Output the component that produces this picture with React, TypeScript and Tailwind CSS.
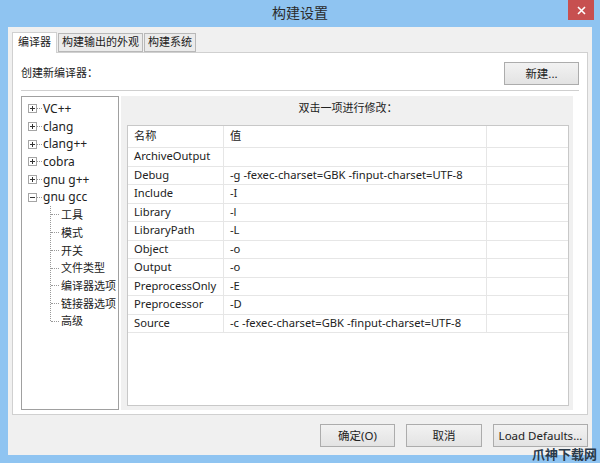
import React from "react";

const font = { fontFamily: '"Noto Sans", "Noto Sans CJK SC", sans-serif' };

const compilers = ["VC++", "clang", "clang++", "cobra", "gnu g++"];
const children = ["工具", "模式", "开关", "文件类型", "编译器选项", "链接器选项", "高级"];

const rows: [string, string][] = [
  ["ArchiveOutput", ""],
  ["Debug", "-g -fexec-charset=GBK -finput-charset=UTF-8"],
  ["Include", "-I"],
  ["Library", "-l"],
  ["LibraryPath", "-L"],
  ["Object", "-o"],
  ["Output", "-o"],
  ["PreprocessOnly", "-E"],
  ["Preprocessor", "-D"],
  ["Source", "-c -fexec-charset=GBK -finput-charset=UTF-8"],
];

function Expander({ open }: { open?: boolean }) {
  return (
    <svg width="9" height="9" viewBox="0 0 9 9" className="shrink-0">
      <rect x="0.5" y="0.5" width="8" height="8" fill="#fff" stroke="#a5a5a5" />
      <line x1="2" y1="4.5" x2="7" y2="4.5" stroke="#333" />
      {!open && <line x1="4.5" y1="2" x2="4.5" y2="7" stroke="#333" />}
    </svg>
  );
}

function Button({ label, w }: { label: string; w: string }) {
  return (
    <div
      className={`${w} h-[23px] flex items-center justify-center border border-[#acacac] bg-gradient-to-b from-[#f2f2f2] to-[#e3e3e3] text-[11.5px] text-[#222]`}
    >
      {label}
    </div>
  );
}

export default function App() {
  return (
    <div className="w-[600px] h-[463px] bg-[#8fc4f1] flex flex-col relative text-[#222]" style={font}>
      <div className="h-[27px] relative flex items-center justify-center">
        <span className="text-[14px] text-[#2b2b2b] mt-[-2px]">构建设置</span>
        <div className="absolute right-[6px] top-0 w-[26px] h-[20px] bg-[#c75050] flex items-center justify-center">
          <svg width="9" height="9" viewBox="0 0 9 9">
            <path d="M1 1 L8 8 M8 1 L1 8" stroke="#fff" strokeWidth="1.6" />
          </svg>
        </div>
      </div>

      <div className="mx-[8px] mb-[8px] flex-1 bg-[#f0f0f0] flex flex-col px-[4px] pt-[4px]">
        {/* tabs */}
        <div className="flex items-end h-[21px] text-[11px]">
          <div className="h-[21px] px-[5px] flex items-center bg-white border border-b-0 border-[#d0d0d0] relative z-10 mb-[-1px] pb-[1px]">
            编译器
          </div>
          <div className="h-[19px] px-[3px] flex items-center bg-[#ebebeb] border border-[#b8b8b8] ml-[1px]">
            构建输出的外观
          </div>
          <div className="h-[19px] px-[3px] flex items-center bg-[#ebebeb] border border-[#b8b8b8] ml-[1px]">
            构建系统
          </div>
        </div>

        {/* panel */}
        <div className="h-[363px] bg-white border border-[#d0d0d0] flex flex-col px-[8px]">
          <div className="h-[37px] flex items-center justify-between pt-[4px]">
            <span className="text-[11px]">创建新编译器：</span>
            <Button label="新建..." w="w-[75px]" />
          </div>
          <div className="h-px bg-[#cfcfcf]" />
          <div className="flex mt-[5px] h-[314px]">
            {/* tree */}
            <div className="w-[98px] border border-[#a0a0a0] bg-white pt-[3px] pl-[6px] text-[12px] leading-[17.7px] whitespace-nowrap">
              {compilers.map((c) => (
                <div key={c} className="flex items-center h-[17.7px]">
                  <Expander />
                  <span className="w-[5px] border-t border-dotted border-[#999] mr-[1px]" />
                  <span>{c}</span>
                </div>
              ))}
              <div className="flex items-center h-[17.7px]">
                <Expander open />
                <span className="w-[5px] border-t border-dotted border-[#999] mr-[1px]" />
                <span>gnu gcc</span>
              </div>
              <div className="ml-[22px] border-l border-dotted border-[#999] h-[115px] text-[11px]">
                {children.map((c) => (
                  <div key={c} className="flex items-center h-[17.7px]">
                    <span className="w-[8px] border-t border-dotted border-[#999] mr-[2px]" />
                    <span>{c}</span>
                  </div>
                ))}
              </div>
            </div>

            {/* properties */}
            <div className="flex-1 ml-[2px] mr-[6px] bg-[#f0f0f0] flex flex-col pl-[6px] pr-[4px] pb-[4px]">
              <div className="h-[29px] flex items-start pt-[4px] justify-center text-[11px]">双击一项进行修改：</div>
              <div className="flex-1 bg-white border border-[#c8c8c8] text-[11.2px]">
                <div className="flex h-[22px] border-b border-[#e6e6e6]">
                  <div className="w-[96px] pl-[6px] flex items-center border-r border-[#e6e6e6]">名称</div>
                  <div className="w-[263px] pl-[6px] flex items-center border-r border-[#e6e6e6]">值</div>
                  <div className="flex-1" />
                </div>
                {rows.map(([k, v]) => (
                  <div key={k} className="flex h-[18.5px] border-b border-[#e6e6e6]">
                    <div className="w-[96px] pl-[6px] flex items-center border-r border-[#e6e6e6] whitespace-nowrap">{k}</div>
                    <div className="w-[263px] pl-[6px] flex items-center border-r border-[#e6e6e6] whitespace-nowrap">{v}</div>
                    <div className="flex-1" />
                  </div>
                ))}
              </div>
            </div>
          </div>
        </div>

        {/* buttons */}
        <div className="flex justify-end items-center gap-[11px] h-[40px] pt-[1px]">
          <Button label="确定(O)" w="w-[75px]" />
          <Button label="取消" w="w-[76px]" />
          <Button label="Load Defaults..." w="w-[95px]" />
        </div>
      </div>

      <div className="absolute right-[3px] bottom-[2px] text-[13px] font-bold text-[#2a3a4a] leading-none">
        爪神下载网
      </div>
    </div>
  );
}
